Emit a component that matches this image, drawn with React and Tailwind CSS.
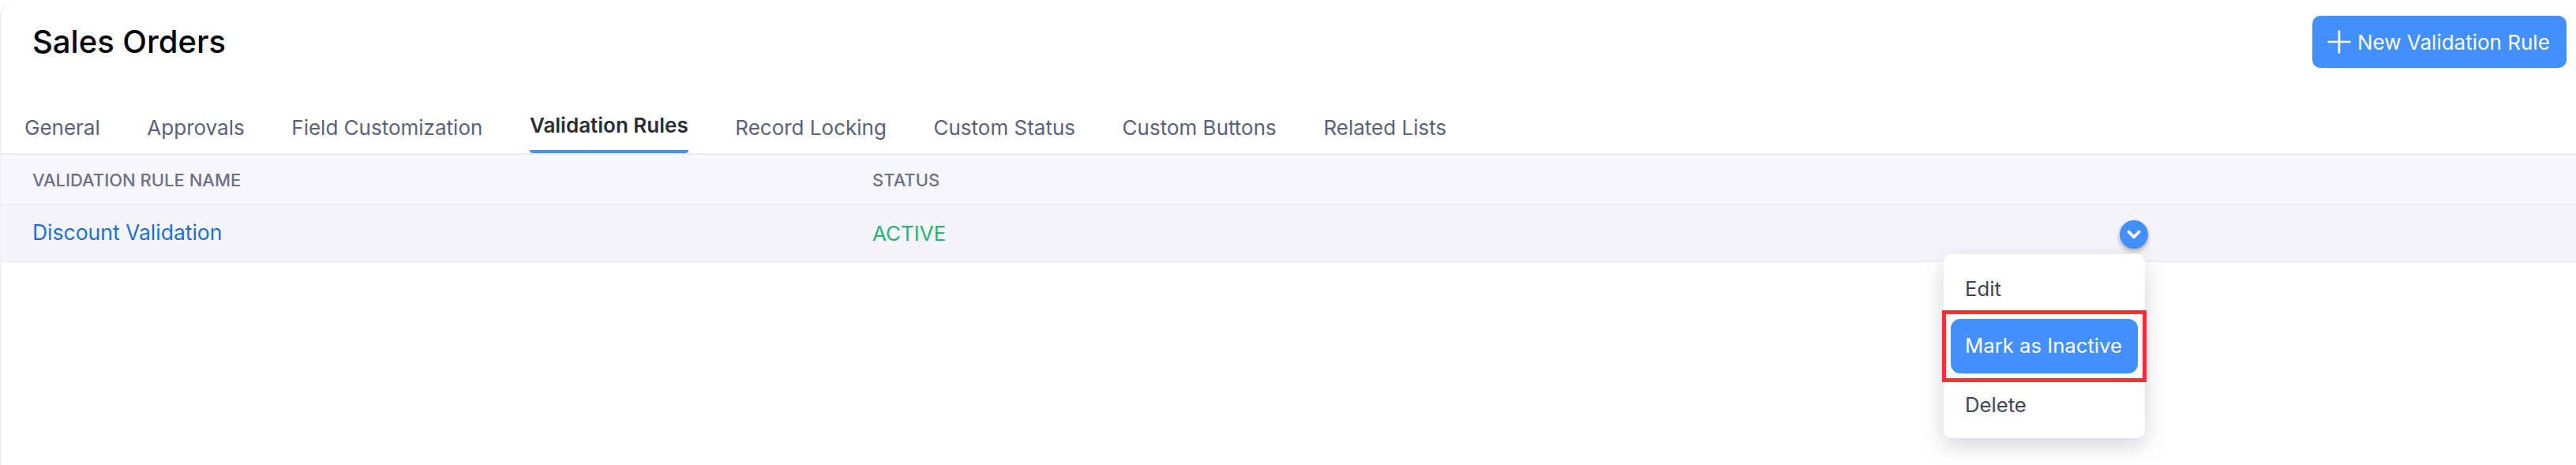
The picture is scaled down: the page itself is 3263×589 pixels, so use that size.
import { ChevronDown, Plus } from "lucide-react"

const tabs = ["General", "Approvals", "Field Customization", "Validation Rules", "Record Locking", "Custom Status", "Custom Buttons", "Related Lists"]

function App() {
  return (
    <div className="h-[589px] bg-white font-['Inter',sans-serif] overflow-hidden">
      <div className="h-[589px] rounded-tl-[20px] border-l-2 border-[#f1f1f5]">
        <div className="flex justify-between pt-5 pl-[39px] pr-3 h-[124px]">
          <h1 className="text-[40px] leading-[66px] font-medium text-black">Sales Orders</h1>
          <button className="flex items-center w-[322px] h-[66px] pl-[11px] rounded-[10px] bg-[#4290fd] text-white text-[26px]">
            <Plus size={46} strokeWidth={1.4} />
            New Validation Rule
          </button>
        </div>

        <div className="flex gap-[59.6px] pl-[29px] h-[72px] border-b-2 border-[#e8e8ee] text-[26px] text-[#5b5f79]">
          {tabs.map((tab) => (
            tab === "Validation Rules"
              ? <div key={tab} className="h-[70px] pt-[15px] border-b-4 border-[#4290fd] rounded-b-sm font-semibold text-[#2b2b35]">{tab}</div>
              : <div key={tab} className="pt-[18px]">{tab}</div>
          ))}
        </div>

        <div className="relative">
          <div className="grid grid-cols-[1064px_1fr] items-center pl-[39px] pt-[2px] h-[64px] bg-[#f7f7fb] border-b-2 border-[#eeeef4] text-[22px] font-medium text-[#6c6f87]">
            <div>VALIDATION RULE NAME</div>
            <div>STATUS</div>
          </div>
          <div className="grid grid-cols-[1064px_1fr] items-center pl-[39px] h-[72px] bg-[#f4f4f9] border-b-2 border-[#eeeef4] text-[26.5px]">
            <div className="text-[#1a6fdc]">Discount Validation</div>
            <div className="text-[#22b573] text-[26px]">ACTIVE</div>
          </div>

          <div className="absolute left-[2683px] top-[83px] flex items-center justify-center w-9 h-9 rounded-full bg-[#4290fd] text-white shadow-[0_3px_6px_rgba(0,0,0,0.3)]">
            <ChevronDown size={26} strokeWidth={3.5} />
          </div>

          <div className="absolute left-[2460px] top-[126px] w-[255px] h-[233px] flex flex-col rounded-[10px] bg-white text-[25.7px] text-[#3f4358] shadow-[0_10px_28px_rgba(60,60,100,0.22)]">
            <div className="h-[71px] pl-[27px] pt-[26px] leading-[36px]">Edit</div>
            <div className="mx-[-2px] h-[91px] border-[5px] border-[#fb2f33] p-[6px]">
              <div className="flex items-center h-[69px] pl-[18px] rounded-[12px] bg-[#4290fd] text-white">Mark as Inactive</div>
            </div>
            <div className="pl-[27px] pt-[11px] leading-[36px]">Delete</div>
          </div>
        </div>
      </div>
    </div>
  )
}

export default App
